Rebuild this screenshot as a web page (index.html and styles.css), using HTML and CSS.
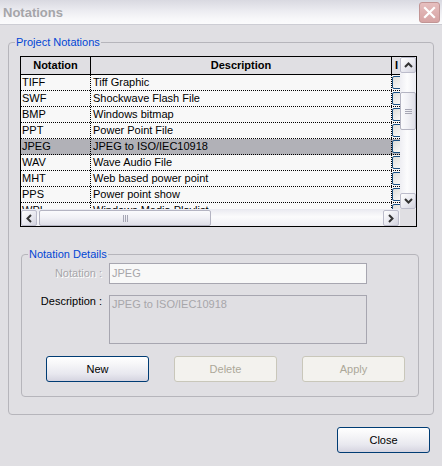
FILE: index.html
```html
<!DOCTYPE html>
<html>
<head>
<meta charset="utf-8">
<title>Notations</title>
<link rel="stylesheet" href="styles.css">
</head>
<body>
<div class="window">
  <div class="titlebar">
    <span class="title">Notations</span>
    <button class="close-x" aria-label="Close">
      <svg width="13" height="13" viewBox="0 0 13 13"><path d="M2 2 L11 11 M11 2 L2 11" stroke="#fff" stroke-width="2.2" stroke-linecap="square"/></svg>
    </button>
  </div>
  <div class="client">
    <fieldset class="group outer">
      <legend>Project Notations</legend>
      <div class="grid">
        <div class="viewport">
          <div class="row head"><div class="c1">Notation</div><div class="c2">Description</div><div class="c3">I</div></div>
          <div class="row"><div class="c1">TIFF</div><div class="c2">Tiff Graphic</div><div class="c3"><span class="chk"></span></div></div>
          <div class="row"><div class="c1">SWF</div><div class="c2">Shockwave Flash File</div><div class="c3"><span class="chk"></span></div></div>
          <div class="row"><div class="c1">BMP</div><div class="c2">Windows bitmap</div><div class="c3"><span class="chk"></span></div></div>
          <div class="row"><div class="c1">PPT</div><div class="c2">Power Point File</div><div class="c3"><span class="chk"></span></div></div>
          <div class="row sel"><div class="c1">JPEG</div><div class="c2">JPEG to ISO/IEC10918</div><div class="c3"><span class="chk"></span></div></div>
          <div class="row"><div class="c1">WAV</div><div class="c2">Wave Audio File</div><div class="c3"><span class="chk"></span></div></div>
          <div class="row"><div class="c1">MHT</div><div class="c2">Web based power point</div><div class="c3"><span class="chk"></span></div></div>
          <div class="row"><div class="c1">PPS</div><div class="c2">Power point show</div><div class="c3"><span class="chk"></span></div></div>
          <div class="row"><div class="c1">WPL</div><div class="c2">Windows Media Playlist</div><div class="c3"><span class="chk"></span></div></div>
        </div>
        <div class="vscroll">
          <div class="sb-btn"><svg width="9" height="6" viewBox="0 0 9 6"><path d="M1 5 L4.5 1.5 L8 5" fill="none" stroke="#333" stroke-width="2"/></svg></div>
          <div class="vthumb"><svg width="7" height="7" viewBox="0 0 7 7"><path d="M0 1.5H7M0 3.5H7M0 5.5H7" stroke="#a6a6b4" stroke-width="1"/></svg></div>
          <div class="sb-fill"></div>
          <div class="sb-btn"><svg width="9" height="6" viewBox="0 0 9 6"><path d="M1 1 L4.5 4.5 L8 1" fill="none" stroke="#333" stroke-width="2"/></svg></div>
        </div>
        <div class="hscroll">
          <div class="sb-btn"><svg width="6" height="9" viewBox="0 0 6 9"><path d="M5 1 L1.5 4.5 L5 8" fill="none" stroke="#333" stroke-width="2"/></svg></div>
          <div class="hthumb"><svg width="7" height="7" viewBox="0 0 7 7"><path d="M1.5 0V7M3.5 0V7M5.5 0V7" stroke="#a6a6b4" stroke-width="1"/></svg></div>
          <div class="sb-fill"></div>
          <div class="sb-btn"><svg width="6" height="9" viewBox="0 0 6 9"><path d="M1 1 L4.5 4.5 L1 8" fill="none" stroke="#333" stroke-width="2"/></svg></div>
        </div>
        <div class="corner"></div>
      </div>
      <fieldset class="group details">
        <legend>Notation Details</legend>
        <div class="form">
          <label class="lbl lbl-dis">Notation :</label>
          <div class="input">JPEG</div>
          <label class="lbl lbl-top">Description :</label>
          <div class="textarea">JPEG to ISO/IEC10918</div>
        </div>
        <div class="buttons">
          <button class="btn">New</button>
          <button class="btn" disabled>Delete</button>
          <button class="btn" disabled>Apply</button>
        </div>
      </fieldset>
    </fieldset>
    <div class="footer">
      <button class="btn btn-close">Close</button>
    </div>
  </div>
</div>
</body>
</html>
```

FILE: styles.css
```css
* { box-sizing: border-box; }
html, body { margin: 0; padding: 0; }
body {
  width: 442px;
  height: 466px;
  overflow: hidden;
  background: #e0dfe3;
  font-family: "Liberation Sans", Arial, sans-serif;
  font-size: 11px;
  color: #000;
}
.window { display: flex; flex-direction: column; height: 466px; }

.titlebar {
  height: 25px;
  flex: none;
  display: flex;
  align-items: center;
  justify-content: space-between;
  padding: 0 2px 0 3px;
  background: linear-gradient(#d9d9e1, #ececf1 45%, #f8f8fa 80%, #fbfbfc);
  border-bottom: 1px solid #cdcdd4;
}
.title { font-weight: bold; font-size: 13px; color: #a5a5a9; }
.close-x {
  width: 21px; height: 21px;
  padding: 0;
  border: 1px solid #c29595;
  border-radius: 3px;
  background: linear-gradient(#e6bfbf, #d6a3a3);
  display: flex; align-items: center; justify-content: center;
}

.client { padding: 0 8px; }

.group {
  margin: 0;
  min-width: 0;
  border: 1px solid #b6b5bb;
  border-radius: 4px;
}
.group legend {
  color: #0046d5;
  font-size: 11px;
  line-height: 13px;
  padding: 0 1px;
}
.outer { margin-top: 11px; padding: 7px 16px 17px 11px; }
.outer > legend { margin-left: -5px; }

/* data grid */
.grid {
  width: 397px;
  border: 1px solid #000;
  display: grid;
  grid-template-columns: 379px 16px;
  grid-template-rows: 152px 17px;
  background: #f8f8f8;
}
.viewport { overflow: hidden; }
.row {
  display: flex;
  height: 16px;
  border-bottom: 1px dotted #000;
  white-space: nowrap;
}
.row > div { flex: none; line-height: 15px; overflow: hidden; }
.c1 { width: 70px; border-right: 1px dotted #000; padding-left: 1px; }
.c2 { width: 301px; border-right: 1px dotted #000; padding-left: 2px; }
.c3 { width: 40px; padding-left: 0; }
.head {
  height: 18px;
  border-bottom: 1px solid #000;
  background: #e0dfe3;
  font-weight: bold;
}
.head > div { line-height: 17px; text-align: center; border-right-style: solid; padding-left: 0; }
.head .c3 { text-align: left; padding-left: 3px; }
.sel { background: #b1b1b7; }
.chk {
  display: block;
  width: 13px; height: 13px;
  margin-top: 1px;
  border: 1px solid #1c5180;
  border-radius: 2px;
  background: linear-gradient(135deg, #dcdcd7, #ffffff);
}

/* scrollbars */
.vscroll {
  display: flex;
  flex-direction: column;
  background: linear-gradient(90deg, #eeeef3, #fcfcfd 45%, #ececf2);
}
.hscroll {
  display: flex;
  align-items: flex-end;
  padding-right: 1px;
  background: linear-gradient(#e9e9f0, #fbfbfc 45%, #efeff4);
}
.sb-btn {
  flex: none;
  width: 16px; height: 16px;
  border: 1px solid #bcbccb;
  border-radius: 2px;
  background: linear-gradient(135deg, #ffffff, #e6e6ee 60%, #d3d3de);
  display: flex; align-items: center; justify-content: center;
}
.sb-fill { flex: 1; }
.vthumb {
  flex: none;
  height: 38px;
  margin-top: 19px;
  border: 1px solid #b4b4c2;
  border-radius: 2px;
  background: linear-gradient(90deg, #fbfbfd, #f0f0f5 50%, #dedee7);
  display: flex; align-items: center; justify-content: center;
}
.hthumb {
  flex: none;
  width: 172px;
  height: 16px;
  margin-left: 2px;
  border: 1px solid #b4b4c2;
  border-radius: 2px;
  background: linear-gradient(#fbfbfd, #f0f0f5 50%, #dedee7);
  display: flex; align-items: center; justify-content: center;
}
.corner { background: #e0dfe3; }

/* details */
.details {
  width: 398px;
  margin: 21px 0 0 1px;
  padding: 2px 10px 14px 7px;
}
.details > legend { margin-left: -1px; }
.form {
  display: grid;
  grid-template-columns: 73px 258px;
  grid-template-rows: 21px 49px;
  column-gap: 7px;
  row-gap: 11px;
}
.lbl { text-align: right; line-height: 13px; white-space: nowrap; }
.lbl-dis { align-self: center; color: #a7a6aa; text-shadow: 1px 1px 0 #ffffff; }
.lbl-top { align-self: start; }
.input {
  border: 1px solid #a7a6b0;
  background: #f8f8f8;
  color: #a7a6aa;
  line-height: 19px;
  padding-left: 2px;
}
.textarea {
  border: 1px solid #a7a6b0;
  background: #e0dfe3;
  color: #a7a6aa;
  line-height: 13px;
  padding: 2px 0 0 2px;
}
.buttons {
  display: flex;
  gap: 25px;
  margin-top: 12px;
  padding-left: 17px;
}
.btn {
  width: 103px;
  height: 26px;
  padding: 0;
  font-family: "Liberation Sans", Arial, sans-serif;
  font-size: 11px;
  color: #000;
  border: 1px solid #003c74;
  border-radius: 3px;
  background: linear-gradient(#ffffff, #f6f6f8 30%, #e8e8ef 70%, #d5d4e0);
}
.btn:disabled {
  color: #aca899;
  border-color: #c9c7ba;
  background: #f3f2ee;
}
.footer {
  display: flex;
  justify-content: flex-end;
  margin-top: 12px;
  padding-right: 4px;
}
.btn-close { width: 93px; }
```
